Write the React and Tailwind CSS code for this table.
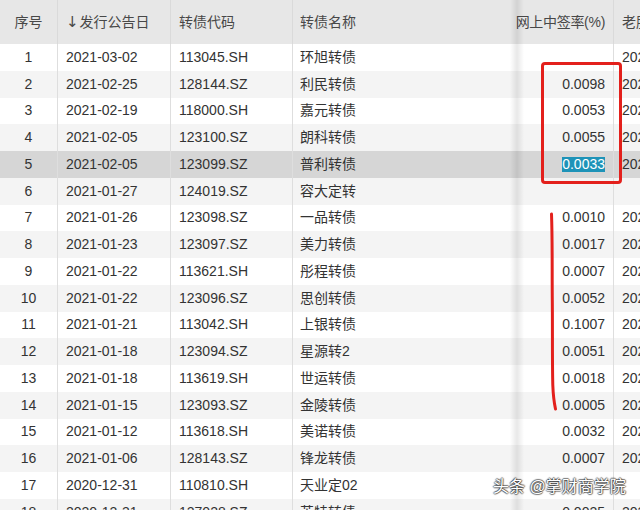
import React from "react";

const rows = [
  ["1", "2021-03-02", "113045.SH", "环旭转债", "", "2021"],
  ["2", "2021-02-25", "128144.SZ", "利民转债", "0.0098", "2021"],
  ["3", "2021-02-19", "118000.SH", "嘉元转债", "0.0053", "2021"],
  ["4", "2021-02-05", "123100.SZ", "朗科转债", "0.0055", "2021"],
  ["5", "2021-02-05", "123099.SZ", "普利转债", "0.0033", "2021"],
  ["6", "2021-01-27", "124019.SZ", "容大定转", "", ""],
  ["7", "2021-01-26", "123098.SZ", "一品转债", "0.0010", "2021"],
  ["8", "2021-01-23", "123097.SZ", "美力转债", "0.0017", "2021"],
  ["9", "2021-01-22", "113621.SH", "彤程转债", "0.0007", "2021"],
  ["10", "2021-01-22", "123096.SZ", "思创转债", "0.0052", "2021"],
  ["11", "2021-01-21", "113042.SH", "上银转债", "0.1007", "2021"],
  ["12", "2021-01-18", "123094.SZ", "星源转2", "0.0051", "2021"],
  ["13", "2021-01-18", "113619.SH", "世运转债", "0.0018", "2021"],
  ["14", "2021-01-15", "123093.SZ", "金陵转债", "0.0005", "2021"],
  ["15", "2021-01-12", "113618.SH", "美诺转债", "0.0032", "2021"],
  ["16", "2021-01-06", "128143.SZ", "锋龙转债", "0.0007", "2021"],
  ["17", "2020-12-31", "110810.SH", "天业定02", "", ""],
  ["18", "2020-12-31", "127028.SZ", "英特转债", "0.0025", "2020"],
];

function Row({ r, i }) {
  const selected = i === 4;
  const bg = selected ? "bg-[#d6d6d6]" : i % 2 === 0 ? "bg-white" : "bg-[#f4f4f4]";
  return (
    <div className={`flex h-[26.75px] items-center shrink-0 ${bg}`}>
      <div className="w-[58px] shrink-0 h-full flex items-center justify-center border-r border-[#dedede]">{r[0]}</div>
      <div className="w-[113px] shrink-0 h-full flex items-center px-2 border-r border-[#dedede]">{r[1]}</div>
      <div className="w-[122px] shrink-0 h-full flex items-center px-2 border-r border-[#dedede]">{r[2]}</div>
      <div className="w-[225px] shrink-0 h-full flex items-center px-[7px]">{r[3]}</div>
      <div className="w-[96px] shrink-0 h-full flex items-center justify-end px-2 border-r border-[#dedede]">
        {selected ? (
          <span className="bg-[#1e93b8] text-white leading-[15px]">{r[4]}</span>
        ) : (
          r[4]
        )}
      </div>
      <div className="w-[60px] shrink-0 h-full flex items-center px-2 whitespace-nowrap">{r[5]}</div>
    </div>
  );
}

export default function App() {
  return (
    <div
      className="relative w-[640px] h-[510px] overflow-hidden bg-white text-[14px] text-[#333]"
      style={{ fontFamily: '"Liberation Sans", "Noto Sans CJK SC", sans-serif' }}
    >
      <div className="flex flex-col">
        <div className="flex h-[44px] items-center shrink-0 bg-[#e7e7e7] text-[#484848]">
          <div className="w-[58px] shrink-0 h-full flex items-center justify-center border-r border-[#dadada]">序号</div>
          <div className="w-[113px] shrink-0 h-full flex items-center px-2 border-r border-[#dadada]">
            <span className="text-[15px] mr-[1px]" style={{ fontFamily: '"DejaVu Sans", sans-serif' }}>↓</span>发行公告日
          </div>
          <div className="w-[122px] shrink-0 h-full flex items-center px-2 border-r border-[#dadada]">转债代码</div>
          <div className="w-[225px] shrink-0 h-full flex items-center px-[7px]">转债名称</div>
          <div className="w-[96px] shrink-0 h-full flex items-center justify-end pr-2 border-r border-[#dadada] whitespace-nowrap tracking-[-0.3px]">网上中签率(%)</div>
          <div className="w-[60px] shrink-0 h-full flex items-center px-2 whitespace-nowrap">老股东配售</div>
        </div>
        {rows.map((r, i) => (
          <Row key={i} r={r} i={i} />
        ))}
      </div>

      {/* frozen column shadow */}
      <div className="absolute top-0 bottom-0 left-[510px] w-[14px] bg-gradient-to-r from-transparent via-[rgba(0,0,0,0.09)] to-transparent pointer-events-none" />

      {/* red box */}
      <div className="absolute left-[541px] top-[62px] w-[81px] h-[122px] border-[3px] border-[#e3201c] rounded-[4px] pointer-events-none" />

      {/* hand drawn red line */}
      <svg className="absolute left-0 top-0 pointer-events-none" width="640" height="510">
        <path
          d="M551.5 214 C552.5 240 552 270 552.3 300 C552.6 330 552.2 360 552.8 385 C553.2 396 554 402 555.5 409"
          stroke="#e3201c"
          strokeWidth="3"
          fill="none"
          strokeLinecap="round"
        />
      </svg>

      {/* watermark */}
      <div
        className="absolute left-[493px] top-[477px] text-[16px] text-white whitespace-nowrap leading-[20px]"
        style={{
          textShadow:
            "1px 0 1px rgba(0,0,0,0.5), -1px 0 1px rgba(0,0,0,0.5), 0 1px 1px rgba(0,0,0,0.5), 0 -1px 1px rgba(0,0,0,0.5)",
        }}
      >
        头条 @掌财商学院
      </div>
    </div>
  );
}
